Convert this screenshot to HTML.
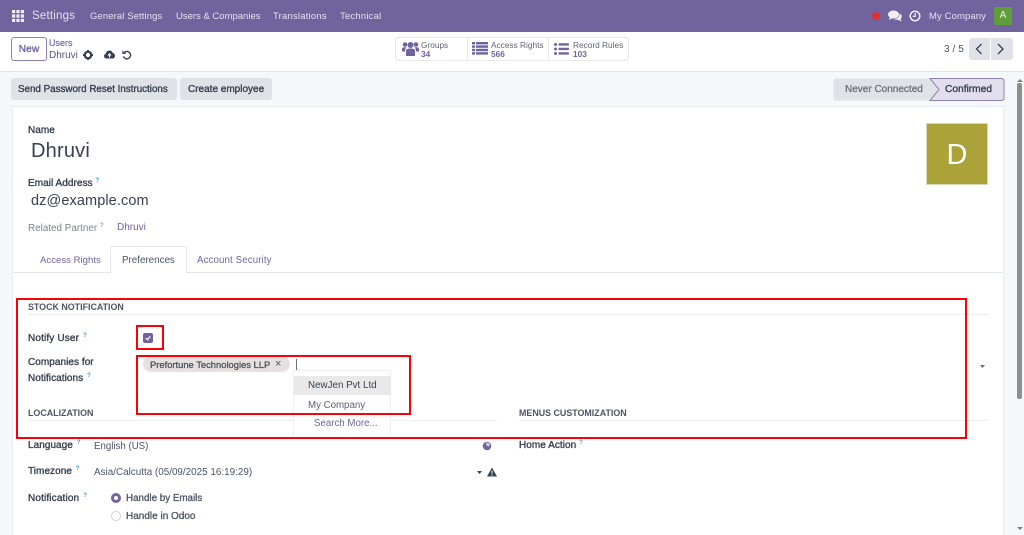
<!DOCTYPE html>
<html><head><meta charset="utf-8"><style>
html,body{margin:0;padding:0;width:1024px;height:535px;overflow:hidden;background:#f5f8fb;font-family:"Liberation Sans",sans-serif}
.a{position:absolute;white-space:nowrap;line-height:1}
.r{position:absolute;box-sizing:border-box}
.nav{color:#e6e0ee;font-size:9.5px;top:12px;letter-spacing:.1px}
.l{color:#374151;font-size:10px;-webkit-text-stroke:.35px #374151;letter-spacing:.05px}
.b{color:#374151;font-size:10px;-webkit-text-stroke:.35px #374151}
.p{color:#71639e;font-size:9.7px}
.g{color:#4b5563;font-size:9.7px}
.h{color:#4b5563;font-size:8.9px;font-weight:bold}
.q{color:#3f9dc9;font-size:6px;font-weight:bold;-webkit-text-stroke:0}
.red{position:absolute;box-sizing:border-box;border:2px solid #fb0007}
</style></head><body>
<!-- nav -->
<div class="r" style="left:0;top:0;width:1024px;height:32px;background:#71639e"></div>
<svg class="a" style="left:12px;top:10px" width="12" height="12" fill="#f1eef6"><rect width="3.2" height="3.2"/><rect x="4.4" width="3.2" height="3.2"/><rect x="8.8" width="3.2" height="3.2"/><rect y="4.4" width="3.2" height="3.2"/><rect x="4.4" y="4.4" width="3.2" height="3.2"/><rect x="8.8" y="4.4" width="3.2" height="3.2"/><rect y="8.8" width="3.2" height="3.2"/><rect x="4.4" y="8.8" width="3.2" height="3.2"/><rect x="8.8" y="8.8" width="3.2" height="3.2"/></svg>
<div class="a" style="left:32px;top:11px;color:#e6e0ee;font-size:11.5px;letter-spacing:.2px">Settings</div>
<div class="a nav" style="left:90px">General Settings</div>
<div class="a nav" style="left:176px;letter-spacing:0">Users &amp; Companies</div>
<div class="a nav" style="left:273px;letter-spacing:.2px">Translations</div>
<div class="a nav" style="left:340px;letter-spacing:.2px">Technical</div>
<div class="r" style="left:872px;top:12px;width:8px;height:8px;border-radius:50%;background:#dc3232"></div>
<svg class="a" style="left:888px;top:10px" width="14" height="12" fill="#f1eef6"><ellipse cx="5.5" cy="4.5" rx="5.5" ry="4"/><path d="M2 7L1 10L5 8Z"/><path d="M11.5 3.5C13.2 4.3 14 5.5 13.7 7C13.5 8 13 8.6 12.6 9L13.5 11.5L10 9.8C8.5 10 7 9.6 6 9C9 9 11.8 7 11.5 3.5Z"/></svg>
<svg class="a" style="left:909px;top:10px" width="12" height="12" fill="none" stroke="#f1eef6"><circle cx="6" cy="6" r="4.8" stroke-width="1.5"/><path d="M6.2 3V6.4H3.8" stroke-width="1.2"/></svg>
<div class="a nav" style="left:929px">My Company</div>
<div class="r" style="left:994px;top:7px;width:18px;height:18px;border-radius:2px;background:#5f9e3a;color:#e8f2e0;font-size:10px;text-align:center;line-height:18px">A</div>
<!-- control panel -->
<div class="r" style="left:0;top:32px;width:1024px;height:40px;background:#fff;border-bottom:1px solid #e3e7ec"></div>
<div class="r" style="left:11px;top:37px;width:36px;height:24px;border:1px solid #8d81b3;border-radius:3px;background:#fff;color:#71639e;font-size:10.2px;-webkit-text-stroke:.35px #71639e;text-align:center;line-height:23px">New</div>
<div class="a p" style="left:49px;top:39px;font-size:9px;-webkit-text-stroke:.15px #71639e">Users</div>
<div class="a" style="left:49px;top:51px;font-size:10px;color:#5b4f82">Dhruvi</div>
<svg class="a" style="left:83px;top:50px" width="10" height="10" fill="#374151"><circle cx="5" cy="5" r="3.2" fill="none" stroke="#374151" stroke-width="2.2"/><path d="M4 0H6V2H4ZM4 8H6V10H4ZM0 4H2V6H0ZM8 4H10V6H8ZM1.2 2.6L2.6 1.2L3.6 2.2L2.2 3.6ZM7.4 1.2L8.8 2.6L7.8 3.6L6.4 2.2ZM1.2 7.4L2.2 6.4L3.6 7.8L2.6 8.8ZM7.8 6.4L8.8 7.4L7.4 8.8L6.4 7.8Z"/></svg>
<svg class="a" style="left:104px;top:50px" width="11" height="9"><path d="M2.5 8.5C1 8.5 0 7.4 0 6C0 4.8.8 3.9 1.8 3.7C2 1.9 3.5.5 5.4.5C7 .5 8.3 1.5 8.8 3C10 3.2 11 4.3 11 5.7C11 7.3 9.8 8.5 8.4 8.5Z" fill="#374151"/><path d="M5.5 7.5V4M3.9 5.5L5.5 3.8L7.1 5.5" stroke="#fff" stroke-width="1" fill="none"/></svg>
<svg class="a" style="left:122px;top:50px" width="10" height="10" fill="none" stroke="#374151" stroke-width="1.4"><path d="M2.2 2.6A3.7 3.7 0 1 1 1.4 6.4"/><path d="M.9 .7V3.4H3.6" stroke-width="1.2"/></svg>
<!-- stat buttons -->
<div class="r" style="left:395px;top:37px;width:234px;height:24px;border:1px solid #e5e8ec;border-radius:3px;background:#fff"></div>
<div class="r" style="left:467px;top:38px;width:1px;height:22px;background:#e5e8ec"></div>
<div class="r" style="left:548px;top:38px;width:1px;height:22px;background:#e5e8ec"></div>
<svg class="a" style="left:402px;top:41px" width="17" height="15" fill="#71639e"><circle cx="8.5" cy="4" r="3"/><circle cx="3" cy="3.5" r="2.3"/><circle cx="14" cy="3.5" r="2.3"/><path d="M4 15V10C4 8.2 5.5 7.5 8.5 7.5C11.5 7.5 13 8.2 13 10V15Z"/><path d="M0 10.5V8C0 6.8 1.2 6.2 3 6.2C3.8 6.2 4.2 6.3 4.6 6.5C3.5 7.3 3 8.4 3 10.5ZM17 10.5V8C17 6.8 15.8 6.2 14 6.2C13.2 6.2 12.8 6.3 12.4 6.5C13.5 7.3 14 8.4 14 10.5Z"/></svg>
<svg class="a" style="left:472px;top:42px" width="16" height="13" fill="#71639e"><rect width="3" height="2.4"/><rect x="4" width="12" height="2.4"/><rect y="3.4" width="3" height="2.4"/><rect x="4" y="3.4" width="12" height="2.4"/><rect y="6.8" width="3" height="2.4"/><rect x="4" y="6.8" width="12" height="2.4"/><rect y="10.2" width="3" height="2.4"/><rect x="4" y="10.2" width="12" height="2.4"/></svg>
<svg class="a" style="left:554px;top:43px" width="15" height="12" fill="#71639e"><circle cx="1.5" cy="1.5" r="1.5"/><rect x="4.5" y=".3" width="10.5" height="2.3" rx=".8"/><circle cx="1.5" cy="6" r="1.5"/><rect x="4.5" y="4.8" width="10.5" height="2.3" rx=".8"/><circle cx="1.5" cy="10.5" r="1.5"/><rect x="4.5" y="9.3" width="10.5" height="2.3" rx=".8"/></svg>
<div class="a" style="left:421px;top:40.5px;font-size:8.3px;color:#5f6470">Groups</div>
<div class="a" style="left:421px;top:50px;font-size:8.3px;font-weight:bold;color:#71639e">34</div>
<div class="a" style="left:491px;top:40.5px;font-size:8.3px;color:#5f6470">Access Rights</div>
<div class="a" style="left:491px;top:50px;font-size:8.3px;font-weight:bold;color:#71639e">566</div>
<div class="a" style="left:573px;top:40.5px;font-size:8.3px;color:#5f6470">Record Rules</div>
<div class="a" style="left:573px;top:50px;font-size:8.3px;font-weight:bold;color:#71639e">103</div>
<div class="a" style="left:944px;top:45px;font-size:10px;color:#4b5563;letter-spacing:.1px">3 / 5</div>
<div class="r" style="left:969px;top:38px;width:21px;height:22px;background:#dfe2e6;border-radius:3px 0 0 3px"></div>
<div class="r" style="left:991px;top:38px;width:22px;height:22px;background:#dfe2e6;border-radius:0 3px 3px 0"></div>
<svg class="a" style="left:975px;top:43px" width="32" height="12" fill="none" stroke="#374151" stroke-width="1.3"><path d="M6.5 1L1.5 6L6.5 11"/><path d="M23 1L28 6L23 11"/></svg>
<!-- action bar -->
<div class="r" style="left:11px;top:78px;width:166px;height:22px;background:#dfe2e6;border-radius:3px"></div>
<div class="a b" style="left:18px;top:84.5px;font-size:9.8px">Send Password Reset Instructions</div>
<div class="r" style="left:180px;top:78px;width:92px;height:22px;background:#dfe2e6;border-radius:3px"></div>
<div class="a b" style="left:188px;top:84.5px">Create employee</div>
<svg class="a" style="left:833px;top:78px" width="172" height="23"><path d="M3 .5H97L106 11.5L97 22.5H3Q.5 22.5 .5 20V3Q.5 .5 3 .5Z" fill="#dfe2e6"/><path d="M97 .5H168Q171 .5 171 3V20Q171 22.5 168 22.5H97L106 11.5Z" fill="#e2deec" stroke="#8d81b3"/></svg>
<div class="a b" style="left:845px;top:84.5px;color:#6b7280;-webkit-text-stroke:.3px #6b7280">Never Connected</div>
<div class="a b" style="left:945px;top:84.5px;font-size:10.2px">Confirmed</div>
<!-- scrollbar -->
<div class="r" style="left:1017px;top:83px;width:5px;height:316px;background:#8f8f8f;border-radius:2px"></div>
<svg class="a" style="left:1017px;top:79px" width="6" height="3" fill="#7f7f7f"><path d="M0 3H6L3 0Z"/></svg>
<svg class="a" style="left:1017px;top:527px" width="6" height="3" fill="#7f7f7f"><path d="M0 0H6L3 3Z"/></svg>
<!-- sheet -->
<div class="r" style="left:12px;top:106px;width:992px;height:429px;background:#fff;border:1px solid #e9edf1;border-bottom:0"></div>
<div class="a l" style="left:28px;top:126px">Name</div>
<div class="a" style="left:31px;top:141px;font-size:20px;color:#374151;letter-spacing:.2px">Dhruvi</div>
<div class="a l" style="left:28px;top:178px">Email Address <span class="q" style="vertical-align:4px">?</span></div>
<div class="a" style="left:31px;top:194px;font-size:14.5px;color:#374151;letter-spacing:.1px">dz@example.com</div>
<div class="a" style="left:28px;top:223px;font-size:9.9px;color:#7c8490">Related Partner <span class="q" style="vertical-align:4px;color:#9aa3ad">?</span></div>
<div class="a p" style="left:117px;top:223px;font-size:10px">Dhruvi</div>
<div class="r" style="left:926px;top:123px;width:62px;height:62px;background:#aba33a;color:#fff;font-size:29px;text-align:center;line-height:62px;border:1px solid #d8d6b4">D</div>
<!-- tabs -->
<div class="r" style="left:13px;top:272px;width:990px;height:1px;background:#e3e7ec"></div>
<div class="r" style="left:110px;top:246px;width:77px;height:27px;background:#fff;border:1px solid #e3e7ec;border-bottom:0;border-radius:2px 2px 0 0"></div>
<div class="a p" style="left:40px;top:256px;font-size:9.6px">Access Rights</div>
<div class="a g" style="left:122px;top:256px;font-size:9.8px">Preferences</div>
<div class="a p" style="left:197px;top:256px;letter-spacing:.12px">Account Security</div>
<!-- stock -->
<div class="a h" style="left:28px;top:303px">STOCK NOTIFICATION</div>
<div class="r" style="left:28px;top:314px;width:960px;height:1px;background:#eceef1"></div>
<div class="a l" style="left:28px;top:333px;letter-spacing:.15px">Notify User <span class="q" style="vertical-align:4px;margin-left:1px">?</span></div>
<div class="r" style="left:143px;top:333px;width:10px;height:10px;border-radius:2px;background:#71639e"></div>
<svg class="a" style="left:145px;top:335px" width="6" height="6" fill="none" stroke="#fff" stroke-width="1.2"><path d="M.8 3L2.5 4.7L5.3 1.4"/></svg>
<div class="a l" style="left:28px;top:358px">Companies for</div>
<div class="a l" style="left:28px;top:373px">Notifications <span class="q" style="vertical-align:4px;margin-left:1px">?</span></div>
<div class="r" style="left:143px;top:356px;width:147px;height:16px;border-radius:8px;background:#e6e0df"></div>
<div class="a" style="left:150px;top:359.5px;font-size:9.4px;color:#4b5563;-webkit-text-stroke:.3px #4b5563">Prefortune Technologies LLP</div>
<div class="a" style="left:275px;top:358.5px;font-size:11px;color:#4b5563">×</div>
<div class="r" style="left:296px;top:359px;width:1px;height:11px;background:#6b7280"></div>
<svg class="a" style="left:980px;top:365px" width="5" height="3" fill="#71639e"><path d="M0 0H5L2.5 3Z"/></svg>
<!-- section headers -->
<div class="a h" style="left:28px;top:409px">LOCALIZATION</div>
<div class="r" style="left:28px;top:420px;width:469px;height:1px;background:#eceef1"></div>
<div class="a h" style="left:519px;top:409px">MENUS CUSTOMIZATION</div>
<div class="r" style="left:519px;top:420px;width:469px;height:1px;background:#eceef1"></div>
<div class="a l" style="left:28px;top:440px">Language <span class="q" style="vertical-align:4px;margin-left:1px">?</span></div>
<div class="a g" style="left:94px;top:442px">English (US)</div>
<svg class="a" style="left:482px;top:441px" width="10" height="10"><circle cx="5" cy="5" r="4.3" fill="#71639e"/><path d="M4 1.5L8 2.5L7 5.5L4.5 4.5Z" fill="#d5d0e2"/></svg>
<div class="a l" style="left:519px;top:440px">Home Action <span class="q" style="vertical-align:4px">?</span></div>
<div class="a l" style="left:28px;top:466px">Timezone <span class="q" style="vertical-align:4px;margin-left:1px">?</span></div>
<div class="a g" style="left:94px;top:468px;font-size:9.9px">Asia/Calcutta (05/09/2025 16:19:29)</div>
<svg class="a" style="left:477px;top:471px" width="5" height="3" fill="#374151"><path d="M0 0H5L2.5 3Z"/></svg>
<svg class="a" style="left:487px;top:467px" width="10" height="10"><path d="M5 .5L10 9.5H0Z" fill="#374151"/><path d="M5 3.5V6.6M5 7.4V8.6" stroke="#fff" stroke-width="1"/></svg>
<div class="a l" style="left:28px;top:493px;letter-spacing:.15px">Notification <span class="q" style="vertical-align:4px;margin-left:1px">?</span></div>
<div class="r" style="left:111px;top:493px;width:10px;height:10px;border-radius:50%;border:3px solid #71639e;background:#fff"></div>
<div class="a b" style="left:126px;top:494px;font-size:9.8px;color:#4b5563;-webkit-text-stroke:.3px #4b5563">Handle by Emails</div>
<div class="r" style="left:111px;top:511px;width:10px;height:10px;border-radius:50%;border:1px solid #ced4da;background:#fff"></div>
<div class="a b" style="left:126px;top:512px;font-size:10px;color:#4b5563;-webkit-text-stroke:.3px #4b5563">Handle in Odoo</div>
<!-- dropdown -->
<div class="r" style="left:293px;top:370px;width:98px;height:66px;background:#fff;border:1px solid #eef0f2;border-bottom:0"></div>
<div class="r" style="left:294px;top:376px;width:97px;height:19px;background:#e9e9e9"></div>
<div class="a g" style="left:308px;top:381px;color:#374151;font-size:9.8px">NewJen Pvt Ltd</div>
<div class="a g" style="left:308px;top:401px;color:#5b6270">My Company</div>
<div class="a p" style="left:314px;top:419px">Search More...</div>
<!-- red annotations -->
<div class="red" style="left:16px;top:298px;width:951px;height:141px"></div>
<div class="red" style="left:136px;top:325px;width:28px;height:25px"></div>
<div class="red" style="left:136px;top:355px;width:275px;height:60px"></div>
</body></html>
